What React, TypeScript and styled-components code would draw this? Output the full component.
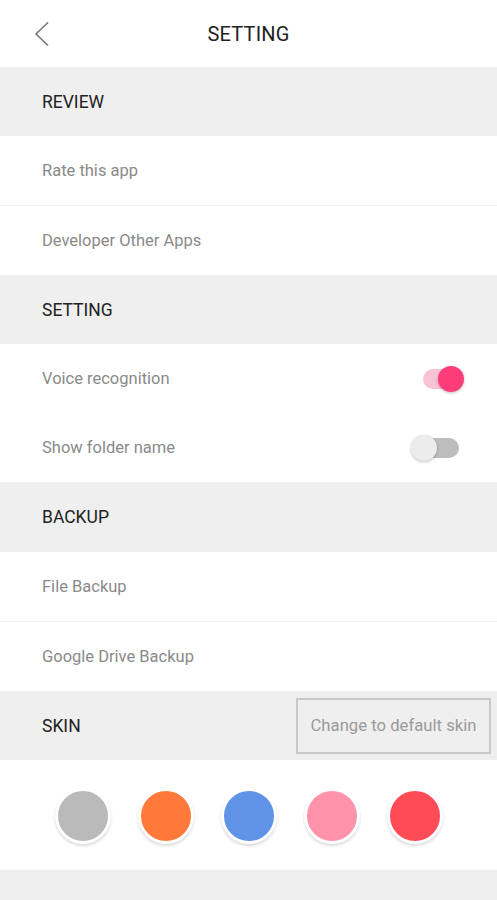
import React, { useState } from 'react'
import styled, { createGlobalStyle } from 'styled-components'

const GlobalStyle = createGlobalStyle`
  body {
    margin: 0;
    background: #efefef;
    font-family: Roboto, "Noto Sans", sans-serif;
  }
`

const Page = styled.div`
  width: 497px;
  min-height: 900px;
  background: #efefef;
`

const Header = styled.header`
  height: 67px;
  background: #fff;
  display: flex;
  align-items: center;
  justify-content: center;
  position: relative;
`

const BackButton = styled.button`
  position: absolute;
  left: 28px;
  top: 18px;
  width: 28px;
  height: 32px;
  padding: 0;
  border: none;
  background: none;
  display: flex;
  align-items: center;
  justify-content: center;
`

const Title = styled.h1`
  margin: 0;
  font-size: 20px;
  font-weight: 400;
  color: #222;
  letter-spacing: 0.2px;
`

const Section = styled.div`
  height: ${(p: { $h?: number }) => p.$h ?? 69}px;
  display: flex;
  align-items: center;
  justify-content: space-between;
  padding-left: 42px;
  padding-right: 6px;
  background: #efefef;
  font-size: 17.5px;
  color: #222;
`

const Row = styled.div<{ $divider?: boolean }>`
  height: 69px;
  display: flex;
  align-items: center;
  justify-content: space-between;
  padding: 0 38px 0 42px;
  background: #fff;
  font-size: 16.5px;
  color: #8a8a8a;
  border-bottom: ${(p) => (p.$divider ? '1px solid #f0f0f0' : 'none')};
`

const Track = styled.div<{ $on: boolean }>`
  width: 36px;
  height: 20px;
  border-radius: 10px;
  background: ${(p) => (p.$on ? '#f9c2d5' : '#bdbdbd')};
  position: relative;
  cursor: pointer;
`

const Thumb = styled.div<{ $on: boolean }>`
  position: absolute;
  top: -3px;
  left: ${(p) => (p.$on ? '15px' : '-12px')};
  width: 26px;
  height: 26px;
  border-radius: 50%;
  background: ${(p) => (p.$on ? '#ff3d7b' : '#ececec')};
  box-shadow: 0 1px 3px rgba(0, 0, 0, 0.25);
`

const SkinButton = styled.button`
  height: 56px;
  width: 195px;
  border: 2px solid #c9c9c9;
  background: #efefef;
  color: #9a9a9a;
  font-family: inherit;
  font-size: 16.7px;
  padding: 0;
`

const Swatches = styled.div`
  height: 110px;
  background: #fff;
  display: flex;
  align-items: center;
  justify-content: center;
  gap: 27px;
  padding-top: 2px;
  box-sizing: border-box;
`

const Swatch = styled.div<{ $color: string }>`
  width: 50px;
  height: 50px;
  border-radius: 50%;
  background: ${(p) => p.$color};
  border: 3px solid #fff;
  box-shadow: 0 2px 3px rgba(0, 0, 0, 0.15);
`

function Toggle({ on, onClick }: { on: boolean; onClick: () => void }) {
  return (
    <Track $on={on} onClick={onClick}>
      <Thumb $on={on} />
    </Track>
  )
}

const skins = ['#bababa', '#ff7a3a', '#5f93e8', '#ff93a9', '#ff4b55']

export default function App() {
  const [voice, setVoice] = useState(true)
  const [folder, setFolder] = useState(false)

  return (
    <Page>
      <GlobalStyle />
      <Header>
        <BackButton aria-label='back'>
          <svg width='18' height='26' viewBox='0 0 18 26' fill='none'>
            <path d='M15 1.5 L3 13 L15 24.5' stroke='#777' strokeWidth='1.6' />
          </svg>
        </BackButton>
        <Title>SETTING</Title>
      </Header>

      <Section>REVIEW</Section>
      <Row $divider>Rate this app</Row>
      <Row>Developer Other Apps</Row>

      <Section>SETTING</Section>
      <Row>
        Voice recognition
        <Toggle on={voice} onClick={() => setVoice(!voice)} />
      </Row>
      <Row>
        Show folder name
        <Toggle on={folder} onClick={() => setFolder(!folder)} />
      </Row>

      <Section $h={70}>BACKUP</Section>
      <Row $divider>File Backup</Row>
      <Row>Google Drive Backup</Row>

      <Section>
        SKIN
        <SkinButton>Change to default skin</SkinButton>
      </Section>
      <Swatches>
        {skins.map((c) => (
          <Swatch key={c} $color={c} />
        ))}
      </Swatches>
    </Page>
  )
}
